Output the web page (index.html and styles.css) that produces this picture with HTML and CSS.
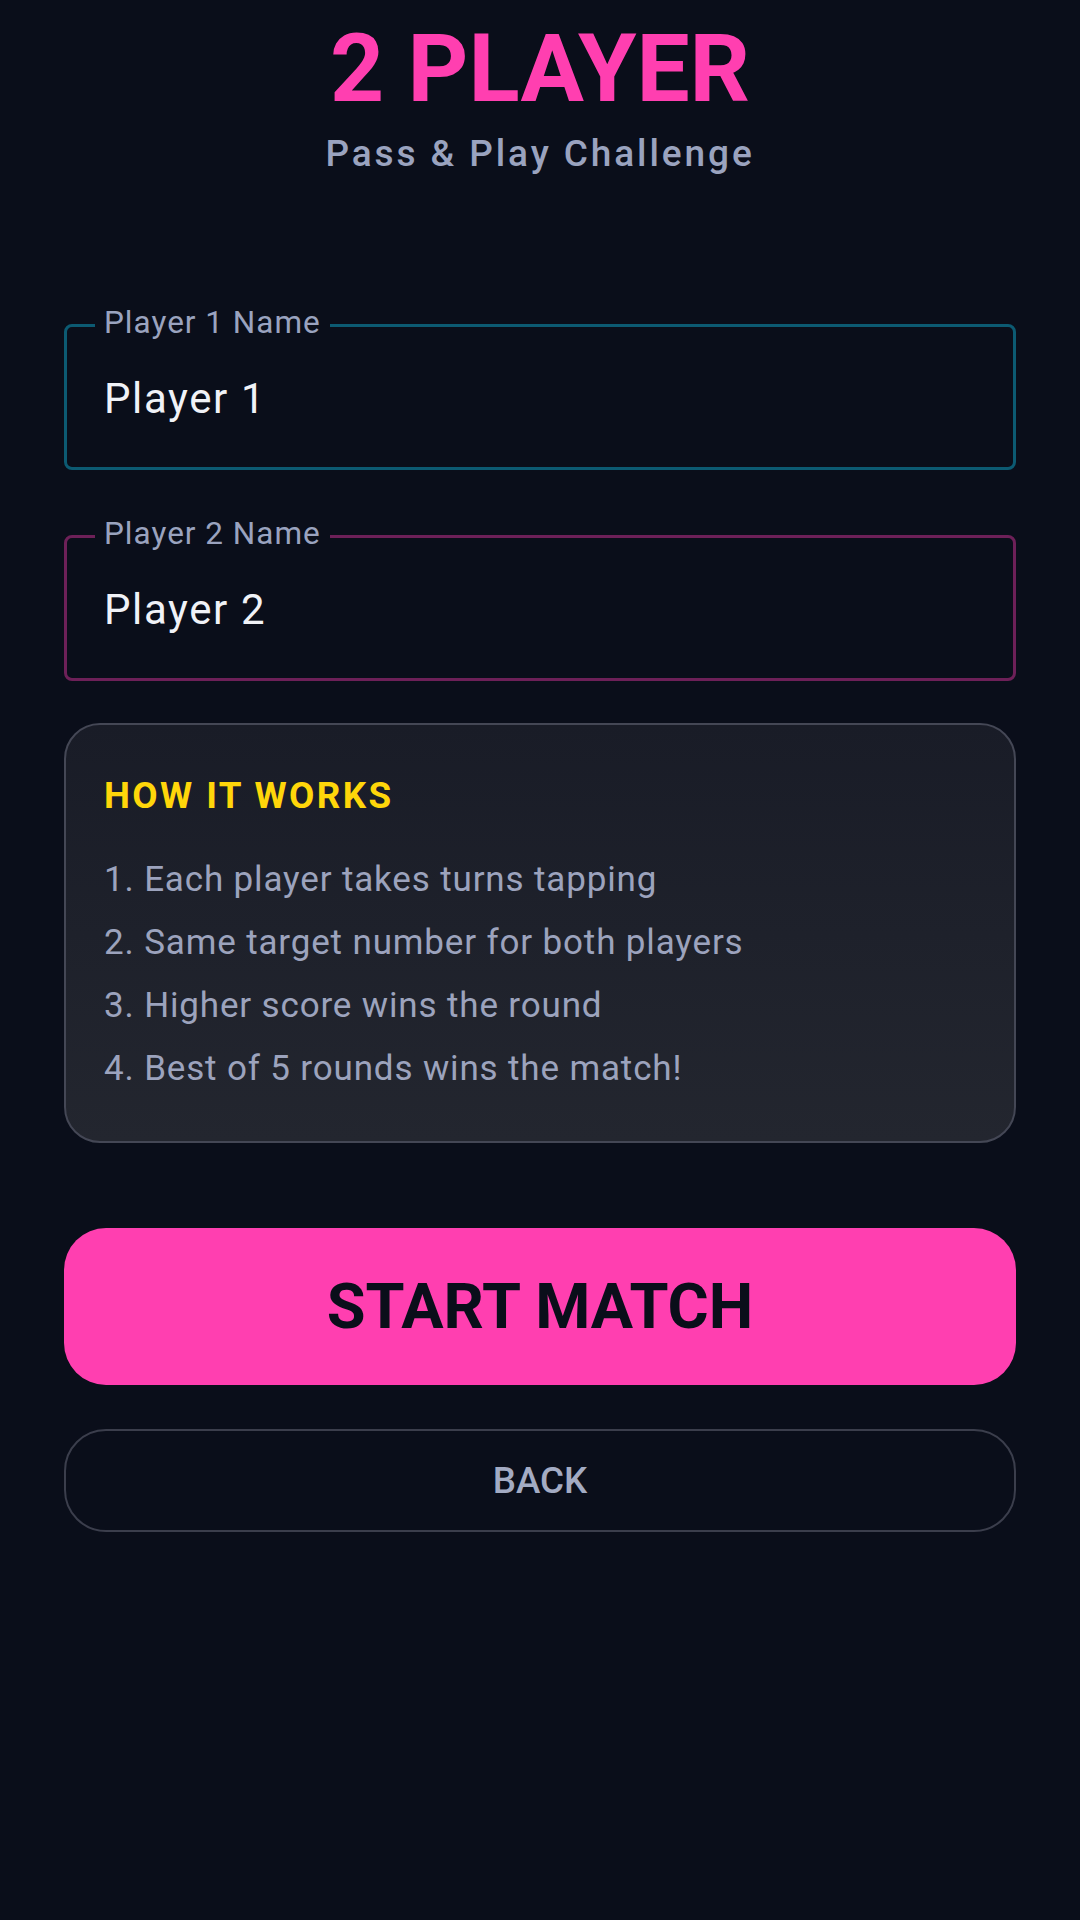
FILE: index.html
```html
<!DOCTYPE html>
<html lang="en">
<head>
<meta charset="utf-8">
<title>2 Player</title>
<link rel="stylesheet" href="styles.css">
</head>
<body>
<main class="screen">
  <header class="header">
    <h1 class="title">2 PLAYER</h1>
    <p class="subtitle">Pass &amp; Play Challenge</p>
  </header>

  <form class="form">
    <fieldset class="field field-p1">
      <legend class="field-label">Player 1 Name</legend>
      <input class="field-input" type="text" value="Player 1">
    </fieldset>
    <fieldset class="field field-p2">
      <legend class="field-label">Player 2 Name</legend>
      <input class="field-input" type="text" value="Player 2">
    </fieldset>
  </form>

  <section class="info">
    <h2 class="info-title">HOW IT WORKS</h2>
    <ol class="info-list">
      <li>1. Each player takes turns tapping</li>
      <li>2. Same target number for both players</li>
      <li>3. Higher score wins the round</li>
      <li>4. Best of 5 rounds wins the match!</li>
    </ol>
  </section>

  <button class="btn btn-start" type="button">START MATCH</button>
  <button class="btn btn-back" type="button">BACK</button>
</main>
</body>
</html>
```

FILE: styles.css
```css
html, body {
  margin: 0;
  padding: 0;
  background: #0a0e1a;
}

body {
  font-family: Roboto, "Noto Sans", "Liberation Sans", sans-serif;
}

.screen {
  width: 1080px;
  min-height: 1920px;
  box-sizing: border-box;
  padding: 14px 64px 0;
  display: flex;
  flex-direction: column;
}

.header {
  text-align: center;
}

.title {
  margin: 0;
  font-size: 94.5px;
  line-height: 110px;
  font-weight: 700;
  color: #ff3fb0;
}

.subtitle {
  margin: 8px 0 0;
  font-size: 37px;
  line-height: 44px;
  font-weight: 500;
  letter-spacing: 2.9px;
  color: #9aa3bf;
}

.form {
  margin: 128px 0 0;
  display: flex;
  flex-direction: column;
  gap: 45px;
}

.field {
  margin: 0;
  min-inline-size: 0;
  padding: 0 28px 17px;
  border: 3px solid #0c5a72;
  border-radius: 8px;
}

.field-p2 {
  border-color: #6d2058;
}

.field-label {
  padding: 0 9px 5px;
  font-size: 31.5px;
  line-height: 37px;
  letter-spacing: 1px;
  color: #9aa3bf;
}

.field-input {
  display: block;
  width: 100%;
  height: 104px;
  box-sizing: border-box;
  margin: 0;
  padding: 0 0 0 9px;
  border: none;
  outline: none;
  background: transparent;
  font-family: inherit;
  font-size: 42px;
  letter-spacing: 1.6px;
  color: #f0f2f7;
}

.info {
  margin-top: 42px;
  padding: 49px 40px 41px 38px;
  border: 2px solid #444755;
  border-radius: 36px;
  background: linear-gradient(180deg, #191c27 0%, #23262f 100%);
}

.info-title {
  margin: 0;
  font-size: 36.75px;
  line-height: 43px;
  font-weight: 700;
  letter-spacing: 2.4px;
  color: #ffd60a;
}

.info-list {
  margin: 31px 0 0;
  padding: 0;
  list-style: none;
}

.info-list li {
  font-size: 35px;
  line-height: 63px;
  letter-spacing: 0.85px;
  color: #9ca3bd;
}

.btn {
  display: block;
  width: 100%;
  margin: 0;
  font-family: inherit;
  cursor: pointer;
}

.btn-start {
  margin-top: 85px;
  height: 157px;
  border: none;
  border-radius: 42px;
  background: #ff3fb0;
  color: #0a0e1a;
  font-size: 63px;
  font-weight: 700;
}

.btn-back {
  margin-top: 44px;
  height: 103px;
  border: 2px solid #3b3e4c;
  border-radius: 42px;
  background: transparent;
  color: #a3abc3;
  font-size: 36.75px;
  font-weight: 500;
}
```
